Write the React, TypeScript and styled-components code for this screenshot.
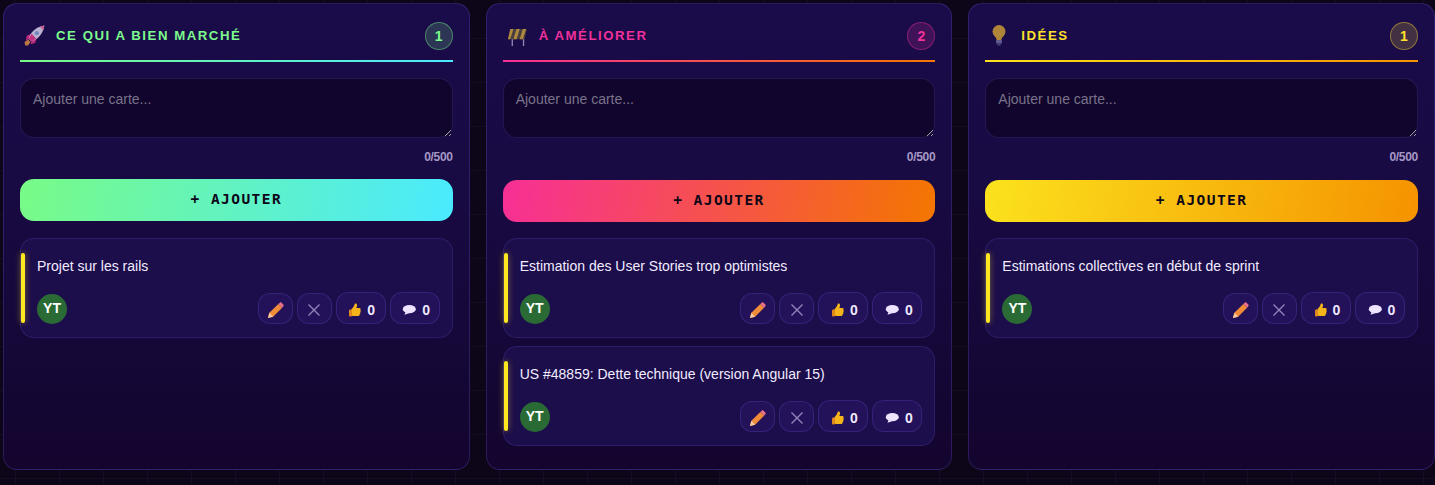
import React from "react";
import styled, { createGlobalStyle } from "styled-components";

const Global = createGlobalStyle`
  html, body { margin: 0; padding: 0; height: 100%; overflow: hidden; }
  body {
    font-family: "Liberation Sans", Arial, sans-serif;
    background-color: #0d0618;
    background-image:
      linear-gradient(rgba(120, 90, 200, 0.07) 1px, transparent 1px),
      linear-gradient(90deg, rgba(120, 90, 200, 0.07) 1px, transparent 1px);
    background-size: 44px 44px;
    background-position: 15px 38px;
  }
  #root { height: 100%; }
`;

const Board = styled.main`
  display: grid;
  grid-template-columns: repeat(3, 1fr);
  gap: 16px;
  padding: 3px 0 0 3px;
  box-sizing: border-box;
  width: 1435px;
`;

const Column = styled.section`
  height: 467px;
  box-sizing: border-box;
  padding: 16px;
  border: 1px solid rgba(120, 90, 220, 0.26);
  border-radius: 14px;
  background: linear-gradient(180deg, #1a0b4a 0%, #180a41 45%, #13052e 100%);
`;

const Header = styled.header<{ $from: string; $to: string }>`
  display: flex;
  align-items: center;
  height: 42px;
  box-sizing: border-box;
  padding-bottom: 9px;
  margin-bottom: 16px;
  border-bottom: 2px solid transparent;
  border-image: linear-gradient(90deg, ${(p) => p.$from}, ${(p) => p.$to}) 1;
`;

const TitleIcon = styled.span<{ $inset: number }>`
  display: flex;
  align-items: flex-end;
  height: 21px;
  width: 36px;
  flex: none;
  padding-left: ${(p) => p.$inset}px;
  box-sizing: border-box;
  opacity: 0.85;
`;

const Title = styled.h2<{ $color: string }>`
  flex: 1;
  margin: 0;
  color: ${(p) => p.$color};
  font-size: 13.2px;
  font-weight: 700;
  letter-spacing: 1.55px;
  text-transform: uppercase;
`;

const Count = styled.span<{ $color: string }>`
  display: flex;
  align-items: center;
  justify-content: center;
  box-sizing: border-box;
  width: 28px;
  height: 28px;
  border-radius: 50%;
  color: ${(p) => p.$color};
  font-size: 14px;
  font-weight: 700;
  background: ${(p) => p.$color}2e;
  border: 1px solid ${(p) => p.$color}66;
`;

const Input = styled.textarea`
  display: block;
  box-sizing: border-box;
  width: 100%;
  height: 60px;
  padding: 12px;
  border: 1px solid rgba(120, 90, 220, 0.2);
  border-radius: 14px;
  background: #11052e;
  color: #fff;
  font: 14px "Liberation Sans", Arial, sans-serif;
  outline: none;
  &::placeholder { color: #797389; opacity: 1; }
`;

const Counter = styled.div`
  margin: 12px 0 16px;
  height: 14px;
  line-height: 14px;
  text-align: right;
  color: #a598c4;
  font-size: 12px;
  font-weight: 700;
  letter-spacing: -0.3px;
`;

const AddButton = styled.button<{ $from: string; $to: string; $raised?: boolean }>`
  display: block;
  width: 100%;
  height: 42px;
  padding: 0 0 2px;
  border: 0;
  border-radius: 14px;
  color: #0d0618;
  background: linear-gradient(100deg, ${(p) => p.$from}, ${(p) => p.$to});
  font: 700 14.5px "DejaVu Sans Mono", monospace;
  letter-spacing: 1.45px;
  transform: translateY(${(p) => (p.$raised ? "-1px" : "0")});
`;

const Cards = styled.div`
  display: flex;
  flex-direction: column;
  gap: 8px;
  margin-top: 16px;
`;

const Card = styled.article`
  position: relative;
  box-sizing: border-box;
  height: 100px;
  padding: 19px 12px 0 16px;
  border: 1px solid rgba(120, 90, 220, 0.2);
  border-radius: 14px;
  background: #1c0d4b;
`;

const Accent = styled.span`
  position: absolute;
  left: 0;
  top: 14px;
  width: 4px;
  height: 70px;
  border-radius: 2px;
  background: #ffe81f;
  box-shadow: 0 0 6px rgba(255, 232, 31, 0.45);
`;

const CardText = styled.p`
  margin: 0;
  height: 17px;
  line-height: 17px;
  color: #f1ecff;
  font-size: 14px;
`;

const CardFooter = styled.div`
  display: flex;
  align-items: flex-end;
  justify-content: space-between;
  margin-top: 17px;
`;

const Avatar = styled.span`
  display: flex;
  align-items: center;
  justify-content: center;
  width: 30px;
  height: 30px;
  padding-bottom: 2px;
  box-sizing: border-box;
  border-radius: 50%;
  background: #2a6b35;
  color: #fff;
  font-size: 14px;
  font-weight: 700;
`;

const Actions = styled.div`
  display: flex;
  align-items: flex-end;
  gap: 4px;
`;

const ActionButton = styled.button<{ $wide?: boolean }>`
  display: flex;
  align-items: center;
  justify-content: center;
  gap: 6px;
  box-sizing: border-box;
  width: ${(p) => (p.$wide ? "50px" : "35px")};
  height: ${(p) => (p.$wide ? "32px" : "31px")};
  padding: 3px 0 0 ${(p) => (p.$wide ? "3px" : "0")};
  border: 1px solid rgba(120, 90, 220, 0.24);
  border-radius: 12px;
  background: #23115a;
  color: #efe8ff;
  font: 700 14px "Liberation Sans", Arial, sans-serif;
`;

const Rocket = () => (
  <svg width="21" height="21" viewBox="0 0 36 36" aria-hidden="true">
    <path d="M1 29l6-4 4 4-4 6-5 0z" fill="#d98a46" />
    <path d="M5 18l9-3-5 9-6 2z M19 31l3-9-9 5-2 6z" fill="#d92f86" />
    <path d="M8 24C10 13 21 3 35 1 33 15 23 26 12 28z" fill="#d8d0e8" />
    <path d="M27 3l8-2-2 8z" fill="#e0709c" />
    <path d="M8 24c1-3 3-6 5-9l8 8c-3 2-6 4-9 5z" fill="#dd3a8c" />
    <circle cx="22" cy="14" r="3.600" fill="#7d9cd6" />
  </svg>
);

const Barrier = () => (
  <svg width="20" height="18" viewBox="0 0 22 20" aria-hidden="true">
    <path d="M5 12h1.500v8H5zM17.500 12H19v8h-1.500z" fill="#a99bc9" />
    <path d="M3.500 1H22l-2.500 11.500H1z" fill="#51463e" />
    <path d="M3.500 1H7L3.500 12.500H1z M10.500 1h3.500l-3.500 11.500H7z M17.500 1H21l-3.500 11.500H14z" fill="#cba03e" />
  </svg>
);

const Bulb = () => (
  <svg width="14" height="21" viewBox="0 0 14 21" aria-hidden="true">
    <circle cx="7" cy="6.500" r="6.500" fill="#c99b38" />
    <path d="M2 10.500c2 2 2.500 3 2.800 5h4.400c.3-2 .8-3 2.800-5z" fill="#c99b38" />
    <rect x="4" y="15" width="6" height="3.600" rx="1" fill="#6f6a9c" />
    <rect x="5" y="18.400" width="4" height="2" rx="1" fill="#4e4a7a" />
  </svg>
);

const Pencil = () => (
  <svg width="17" height="17" viewBox="0 0 18 18" aria-hidden="true">
    <path d="M1 17l1.500-5.500L12 2l4 4-9.500 9.500z" fill="#ef8c3a" />
    <path d="M12 2l1.500-1.300c.6-.5 1.300-.5 1.800 0l2 2c.5.500.5 1.200 0 1.800L16 6z" fill="#e8708a" />
    <path d="M1 17l1.500-5.500 4 4z" fill="#f6c9a0" />
  </svg>
);

const Close = () => (
  <svg width="12" height="12" viewBox="0 0 12 12" aria-hidden="true">
    <path d="M.5.5l11 11M11.500.5l-11 11" stroke="#9385ba" strokeWidth="1.400" fill="none" />
  </svg>
);

const Thumb = () => (
  <svg width="12" height="14" viewBox="0 0 12 14" aria-hidden="true">
    <path d="M2.500 6c1.500-1 2.800-3 3.300-5.200C6 .1 7.800.2 8 1.700c.2 1.200-.2 2.500-.7 3.300H10.500c1.200 0 1.500 1.500.8 2 .7.600.6 1.700-.1 2.100.4.700.2 1.700-.5 2 .2 1-.4 1.900-1.400 1.900H4.500C3.500 13 2.500 12.800 2.500 12.300z" fill="#f4b41a" />
    <rect x="0" y="6.500" width="3" height="7" rx="1" fill="#e08a1e" />
  </svg>
);

const Bubble = () => (
  <svg width="14" height="10" viewBox="0 0 14 10" aria-hidden="true">
    <ellipse cx="7.300" cy="4.200" rx="6.500" ry="4.100" fill="#eee4ff" />
    <path d="M3.500 7L2.500 9.800 7 8.200z" fill="#eee4ff" />
  </svg>
);

type ColumnData = {
  title: string;
  color: string;
  from: string;
  to: string;
  count: number;
  icon: React.ReactNode;
  iconInset: number;
  raised?: boolean;
  cards: string[];
};

const columns: ColumnData[] = [
  {
    title: "Ce qui a bien marché",
    color: "#7dfb8c",
    from: "#78fb86",
    to: "#4aeaff",
    count: 1,
    icon: <Rocket />,
    iconInset: 4,
    raised: true,
    cards: ["Projet sur les rails"],
  },
  {
    title: "À améliorer",
    color: "#f0319a",
    from: "#f72f96",
    to: "#f47600",
    count: 2,
    icon: <Barrier />,
    iconInset: 4,
    cards: [
      "Estimation des User Stories trop optimistes",
      "US #48859: Dette technique (version Angular 15)",
    ],
  },
  {
    title: "Idées",
    color: "#ffe02a",
    from: "#fbe21d",
    to: "#f59300",
    count: 1,
    icon: <Bulb />,
    iconInset: 7,
    cards: ["Estimations collectives en début de sprint"],
  },
];

export default function App() {
  return (
    <>
      <Global />
      <Board>
        {columns.map((c) => (
          <Column key={c.title}>
            <Header $from={c.from} $to={c.to}>
              <TitleIcon $inset={c.iconInset}>{c.icon}</TitleIcon>
              <Title $color={c.color}>{c.title}</Title>
              <Count $color={c.color}>{c.count}</Count>
            </Header>
            <Input placeholder="Ajouter une carte..." />
            <Counter>0/500</Counter>
            <AddButton $from={c.from} $to={c.to} $raised={c.raised}>+ AJOUTER</AddButton>
            <Cards>
              {c.cards.map((text) => (
                <Card key={text}>
                  <Accent />
                  <CardText>{text}</CardText>
                  <CardFooter>
                    <Avatar>YT</Avatar>
                    <Actions>
                      <ActionButton><Pencil /></ActionButton>
                      <ActionButton><Close /></ActionButton>
                      <ActionButton $wide><Thumb />0</ActionButton>
                      <ActionButton $wide><Bubble />0</ActionButton>
                    </Actions>
                  </CardFooter>
                </Card>
              ))}
            </Cards>
          </Column>
        ))}
      </Board>
    </>
  );
}
